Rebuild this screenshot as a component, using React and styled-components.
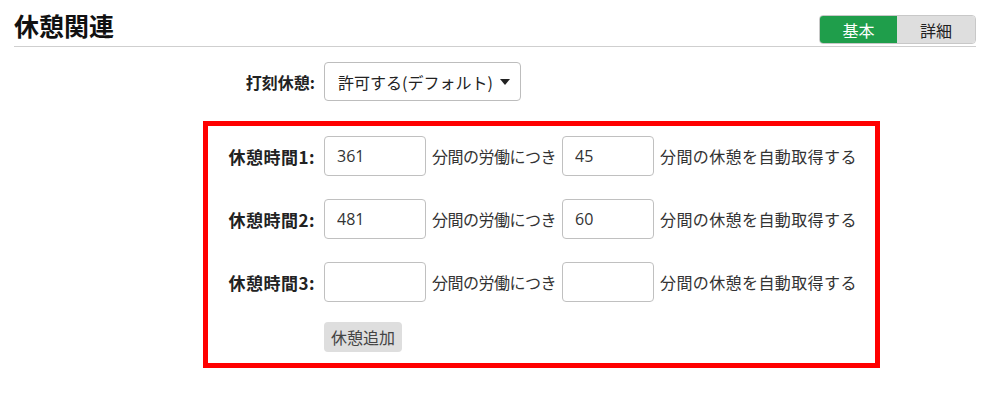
import React from 'react'
import styled, { createGlobalStyle } from 'styled-components'

const GlobalStyle = createGlobalStyle`
    body {
        margin: 0;
        background: #fff;
        font-family: "Noto Sans CJK JP", "Noto Sans", sans-serif;
        color: #333;
    }
`

const Page = styled.div`
    padding: 0 10px 0 14px;
`
const Header = styled.div`
    display: flex;
    justify-content: space-between;
    align-items: flex-start;
    height: 46px;
    border-bottom: 1px solid #cfcfcf;
`
const Title = styled.h2`
    margin: 7px 0 0;
    font-size: 25px;
    line-height: 36px;
    font-weight: bold;
    color: #111;
`
const Toggle = styled.div`
    display: flex;
    margin-top: 15px;
    height: 29px;
    border: 1px solid #c8c8c8;
    border-radius: 4px;
    overflow: hidden;
    box-sizing: border-box;
`
const ToggleButton = styled.div`
    display: flex;
    align-items: center;
    justify-content: center;
    width: ${p => p.$width}px;
    font-size: 16px;
    background: ${p => (p.$active ? '#1f9e4b' : '#dedede')};
    color: ${p => (p.$active ? '#fff' : '#222')};
`
const Form = styled.div`
    margin-left: 189px;
    width: 677px;
`
const Row = styled.div`
    display: grid;
    grid-template-columns: 107px auto;
    column-gap: 9px;
    align-items: center;
`
const SelectRow = styled(Row)`
    margin-top: 15px;
    padding-left: 5px;
`
const Label = styled.div`
    text-align: right;
    font-size: ${p => (p.$large ? 17 : 16)}px;
    letter-spacing: ${p => (p.$large ? 0.5 : 0)}px;
    font-weight: bold;
    color: #222;
    white-space: nowrap;
`
const Select = styled.div`
    display: flex;
    align-items: center;
    justify-content: space-between;
    box-sizing: border-box;
    width: 197px;
    height: 39px;
    padding: 0 10px 0 13px;
    border: 1px solid #bdbdbd;
    border-radius: 4px;
    font-size: 16px;
    color: #222;
`
const Caret = styled.span`
    width: 0;
    height: 0;
    border-left: 5px solid transparent;
    border-right: 5px solid transparent;
    border-top: 6px solid #222;
`
const BreakBox = styled.div`
    margin-top: 20px;
    border: 5px solid #ff0000;
    padding: 10px 0 11px;
    display: flex;
    flex-direction: column;
    gap: 23px;
`
const Controls = styled.div`
    display: flex;
    align-items: center;
    gap: 6px;
    font-size: 16px;
    color: #333;
    white-space: nowrap;
`
const Text = styled.span`
    letter-spacing: ${p => p.$spacing || 0}px;
`
const NumberInput = styled.input`
    box-sizing: border-box;
    width: ${p => p.$width}px;
    height: 40px;
    padding: 0 12px;
    border: 1px solid #c0c0c0;
    border-radius: 4px;
    font-family: "Open Sans", "Noto Sans CJK JP", sans-serif;
    font-size: 16px;
    color: #333;
    outline: none;
`
const AddButton = styled.button`
    box-sizing: border-box;
    width: 78px;
    height: 30px;
    margin-top: -6px;
    padding: 0;
    border: none;
    border-radius: 4px;
    background: #dedede;
    font-family: inherit;
    font-size: 16px;
    color: #444;
`

const breaks = [
    { id: 1, work: '361', rest: '45' },
    { id: 2, work: '481', rest: '60' },
    { id: 3, work: '', rest: '' },
]

const App = () => {
  return (
    <Page>
        <GlobalStyle />
        <Header>
            <Title>休憩関連</Title>
            <Toggle>
                <ToggleButton $active $width={77}>基本</ToggleButton>
                <ToggleButton $width={78}>詳細</ToggleButton>
            </Toggle>
        </Header>
        <Form>
            <SelectRow>
                <Label>打刻休憩:</Label>
                <Select>
                    許可する(デフォルト)
                    <Caret />
                </Select>
            </SelectRow>
            <BreakBox>
                {breaks.map(b => (
                    <Row key={b.id}>
                        <Label $large>休憩時間{b.id}:</Label>
                        <Controls>
                            <NumberInput $width={102} defaultValue={b.work} />
                            <Text $spacing={-0.5}>分間の労働につき</Text>
                            <NumberInput $width={92} defaultValue={b.rest} />
                            <Text $spacing={0.4}>分間の休憩を自動取得する</Text>
                        </Controls>
                    </Row>
                ))}
                <Row>
                    <span />
                    <div>
                        <AddButton>休憩追加</AddButton>
                    </div>
                </Row>
            </BreakBox>
        </Form>
    </Page>
  )
}

export default App
